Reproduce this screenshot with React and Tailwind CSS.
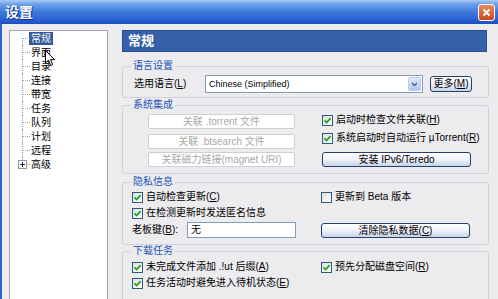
import React from "react";

const TREE = ["常规", "界面", "目录", "连接", "带宽", "任务", "队列", "计划", "远程", "高级"];

function Check({ checked }) {
  return (
    <span className="flex h-[11px] w-[11px] shrink-0 items-center justify-center border border-[#2c5a85] bg-gradient-to-br from-[#dedfd8] to-white">
      {checked && (
        <svg width="9" height="9" viewBox="0 0 9 9">
          <path d="M1.5 4.3 L3.6 6.5 L7.6 2.2" stroke="#21a121" strokeWidth="1.8" fill="none" />
        </svg>
      )}
    </span>
  );
}

function CheckRow({ checked, children, className = "" }) {
  return (
    <div className={`flex h-[14px] items-center gap-[3px] ${className}`}>
      <Check checked={checked} />
      <span className="whitespace-nowrap">{children}</span>
    </div>
  );
}

function XpButton({ children, className = "" }) {
  return (
    <div
      className={`flex items-center justify-center rounded-[3px] border border-[#23406f] bg-gradient-to-b from-white via-[#eef2f9] to-[#c7d3e8] whitespace-nowrap ${className}`}
    >
      {children}
    </div>
  );
}

function DisabledButton({ children, className = "" }) {
  return (
    <div
      className={`flex h-[15px] items-center justify-center rounded-[2px] border border-[#cfcfd2] bg-white text-[#aaa9a6] whitespace-nowrap ${className}`}
    >
      {children}
    </div>
  );
}

function Group({ title, className = "", children }) {
  return (
    <fieldset className={`rounded-[3px] border border-[#d2d1d8] ${className}`}>
      <legend className="ml-[8px] px-[2px] leading-[12px] text-[#2553b8]">{title}</legend>
      {children}
    </fieldset>
  );
}

function Tree() {
  const last = TREE.length - 1;
  return (
    <div className="ml-[7px] mt-[6px] w-[99px] shrink-0 border border-[#9ea7b3] bg-white">
      {TREE.map((t, i) => (
        <div key={t} className="flex h-[14px] items-center">
          <div className="relative h-full w-[19px] shrink-0">
            {i === 0 && (
              <span className="absolute bottom-0 left-[12px] top-[7px] border-l border-dotted border-[#a3a3a3]" />
            )}
            {i > 0 && i < last && (
              <span className="absolute bottom-0 left-[12px] top-0 border-l border-dotted border-[#a3a3a3]" />
            )}
            {i === last && (
              <span className="absolute left-[12px] top-0 h-[7px] border-l border-dotted border-[#a3a3a3]" />
            )}
            <span className="absolute left-[13px] top-[7px] w-[7px] border-t border-dotted border-[#a3a3a3]" />
            {i === last && (
              <span className="absolute left-[8px] top-[3px] flex h-[9px] w-[9px] items-center justify-center border border-[#8a98a8] bg-white">
                <svg width="7" height="7" viewBox="0 0 7 7">
                  <path d="M1 3.5 H6 M3.5 1 V6" stroke="#222" strokeWidth="1" />
                </svg>
              </span>
            )}
          </div>
          <span
            className={
              i === 0
                ? "bg-[#33589e] px-[2px] leading-[13px] text-white"
                : "px-[2px] leading-[13px]"
            }
          >
            {t}
          </span>
        </div>
      ))}
    </div>
  );
}

export default function App() {
  return (
    <div className="relative flex h-[299px] w-[498px] flex-col overflow-hidden bg-[#ecebee] font-['Liberation_Sans','Noto_Sans_CJK_SC',sans-serif] text-[10px] leading-[14px] text-black">
      {/* title bar */}
      <div className="flex h-[24px] shrink-0 items-center justify-between bg-[linear-gradient(180deg,#a9cbf4_0%,#6b9fe8_18%,#3e7adc_50%,#2b63d3_80%,#1a4ebf_100%)] pl-[5px] pr-[3px]">
        <span className="text-[14px] font-bold leading-[16px] text-white [text-shadow:1px_1px_0_#0b2c86]">设置</span>
        <div className="flex h-[17px] w-[17px] items-center justify-center rounded-[3px] border border-white bg-gradient-to-b from-[#ec8a62] to-[#c8461e]">
          <svg width="9" height="9" viewBox="0 0 9 9">
            <path d="M1.5 1.5 L7.5 7.5 M7.5 1.5 L1.5 7.5" stroke="white" strokeWidth="1.8" />
          </svg>
        </div>
      </div>

      {/* body */}
      <div className="flex flex-1 border-l-2 border-[#2b63d3]">
        <Tree />

        <div className="ml-[14px] flex w-[367px] flex-col">
          {/* header */}
          <div className="mt-[6px] flex h-[22px] w-[365px] items-center border border-[#2a4f8f] bg-[#3561a8] pl-[5px]">
            <span className="text-[13px] font-bold leading-[16px] text-white">常规</span>
          </div>

          {/* 语言设置 */}
          <Group title="语言设置" className="mt-[8px] h-[38px]">
            <div className="ml-[11px] mt-[3px] flex h-[18px] items-center">
              <span className="w-[71px] shrink-0 whitespace-nowrap">
                选用语言(<u>L</u>)
              </span>
              <div className="flex h-[18px] w-[218px] items-center border border-[#7f9db9] bg-white pl-[3px]">
                <span className="flex-1 text-[9px]">Chinese (Simplified)</span>
                <span className="mr-px flex h-[14px] w-[13px] items-center justify-center rounded-[2px] border border-[#b9cbf2] bg-gradient-to-b from-[#e2eafd] to-[#b3c7f4]">
                  <svg width="7" height="5" viewBox="0 0 7 5">
                    <path d="M1 1 L3.5 3.5 L6 1" stroke="#4d6185" strokeWidth="1.5" fill="none" />
                  </svg>
                </span>
              </div>
              <XpButton className="ml-[7px] h-[16px] w-[42px]">
                更多(<u>M</u>)
              </XpButton>
            </div>
          </Group>

          {/* 系统集成 */}
          <Group title="系统集成" className="mt-[1px] h-[75px]">
            <div className="flex">
              <div className="ml-[25px] flex w-[147px] flex-col">
                <DisabledButton className="mt-[3px]">关联 .torrent 文件</DisabledButton>
                <DisabledButton className="mt-[5px]">关联 .btsearch 文件</DisabledButton>
                <DisabledButton className="mt-[3px]">关联磁力链接(magnet URI)</DisabledButton>
              </div>
              <div className="ml-[27px] flex w-[149px] flex-col">
                <CheckRow checked className="mt-[2px]">
                  启动时检查文件关联(<u>H</u>)
                </CheckRow>
                <CheckRow checked className="mt-[4px]">
                  系统启动时自动运行 µTorrent(<u>R</u>)
                </CheckRow>
                <XpButton className="mt-[7px] h-[15px]">安装 IPv6/Teredo</XpButton>
              </div>
            </div>
          </Group>

          {/* 隐私信息 */}
          <Group title="隐私信息" className="mt-[2px] h-[69px]">
            <div className="flex">
              <div className="ml-[9px] flex w-[164px] flex-col">
                <CheckRow checked className="mt-[2px]">
                  自动检查更新(<u>C</u>)
                </CheckRow>
                <CheckRow checked className="mt-[2px]">
                  在检测更新时发送匿名信息
                </CheckRow>
                <div className="mt-[2px] flex h-[16px] items-center">
                  <span className="w-[55px] shrink-0 whitespace-nowrap">
                    老板键(<u>B</u>):
                  </span>
                  <div className="flex h-[16px] flex-1 items-center border border-[#7f9db9] bg-white pl-[3px]">
                    无
                  </div>
                </div>
              </div>
              <div className="ml-[25px] flex w-[149px] flex-col">
                <CheckRow className="mt-[2px]">更新到 Beta 版本</CheckRow>
                <XpButton className="mt-[19px] h-[15px]">
                  清除隐私数据(<u>C</u>)
                </XpButton>
              </div>
            </div>
          </Group>

          {/* 下载任务 */}
          <Group title="下载任务" className="h-[60px]">
            <div className="flex">
              <div className="ml-[9px] flex w-[164px] flex-col">
                <CheckRow checked className="mt-[3px]">
                  未完成文件添加 .!ut 后缀(<u>A</u>)
                </CheckRow>
                <CheckRow checked className="mt-[2px]">
                  任务活动时避免进入待机状态(<u>E</u>)
                </CheckRow>
              </div>
              <div className="ml-[25px] flex w-[149px] flex-col">
                <CheckRow checked className="mt-[3px]">
                  预先分配磁盘空间(<u>R</u>)
                </CheckRow>
              </div>
            </div>
          </Group>
        </div>
      </div>

      {/* mouse pointer */}
      <svg className="absolute left-[45px] top-[50px]" width="11" height="17" viewBox="0 0 11 17">
        <path d="M0.5 0.5 V13 L3.5 10.2 L5.6 15.5 L7.6 14.6 L5.5 9.6 H9.5 Z" fill="white" stroke="black" strokeWidth="1" />
      </svg>
    </div>
  );
}
